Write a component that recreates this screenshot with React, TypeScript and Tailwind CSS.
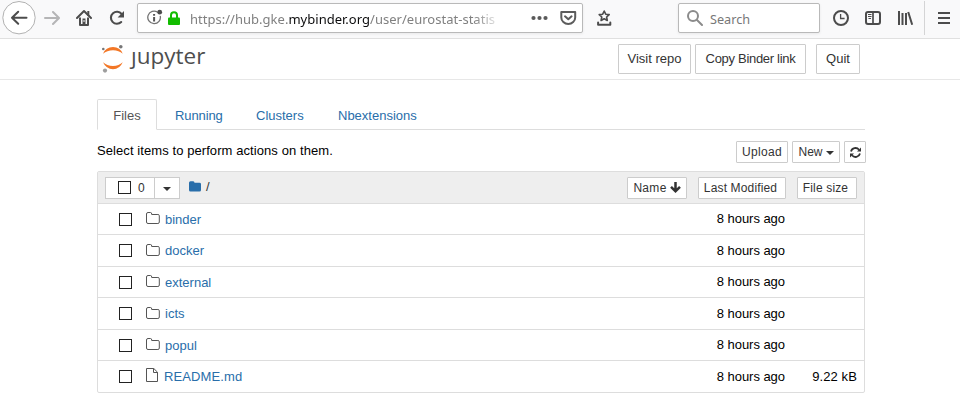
import type { ReactNode } from "react";

const SANS = "font-['Liberation_Sans',Arial,sans-serif]";
const HUMANIST = "font-['Noto_Sans','Open_Sans',sans-serif]";

function BrowserBar() {
  return (
    <div className={`flex h-[39px] items-start border-b border-[#e0e0e0] bg-[#f9f9fa] ${HUMANIST}`}>
      <svg className="mt-px ml-[2px] h-[34px] w-[34px]" viewBox="0 0 34 34" fill="none">
        <circle cx="17" cy="16.7" r="16.2" fill="#fff" stroke="#b1b1b1" />
        <path d="M24.5 16.8H10.5M16.2 10.8L10 16.8l6.2 6" stroke="#4c4c4c" strokeWidth="2" strokeLinecap="round" strokeLinejoin="round" />
      </svg>
      <svg className="mt-[9px] ml-[8px] h-[18px] w-[16px]" viewBox="0 0 16 18" fill="none">
        <path d="M1 9h13.5M9 3l6 6-6 6" stroke="#b5b5b6" strokeWidth="2" strokeLinecap="round" strokeLinejoin="round" />
      </svg>
      <svg className="mt-[9px] ml-[16px] h-[18px] w-[16px]" viewBox="0 0 16 18" fill="none">
        <path d="M1 9L8 2l7 7" stroke="#4c4c4c" strokeWidth="2" strokeLinecap="round" strokeLinejoin="round" />
        <path d="M11.3 2h2v5h-2z" fill="#4c4c4c" />
        <path d="M4 8.5V16h8V8.5" stroke="#4c4c4c" strokeWidth="2" strokeLinejoin="round" />
        <path d="M6.5 9.5h3V16h-3z" fill="#4c4c4c" />
        <path d="M7.5 11h1v2h-1z" fill="#f9f9fa" />
      </svg>
      <svg className="mt-[9px] ml-[17px] h-[18px] w-[16px]" viewBox="0 0 16 18" fill="none">
        <path d="M12.6 5A6 6 0 1 0 12.2 13" stroke="#4c4c4c" strokeWidth="2.1" strokeLinecap="round" />
        <path d="M15 2v6.4H8.6z" fill="#4c4c4c" />
      </svg>
      <div className="mt-[3px] ml-[12px] flex h-[30px] w-[446px] items-center rounded-[2px] border border-[#b9b9b9] bg-white shadow-[0_1px_3px_rgba(0,0,0,0.07)]">
        <svg className="ml-[9px] h-[18px] w-[17px]" viewBox="0 0 17 18" fill="none">
          <path d="M10.7 3.2A6.3 6.3 0 1 0 13.2 6.8" stroke="#737373" strokeWidth="1.3" />
          <path d="M6.1 8h2v4.5h-2zM6.1 5h2v1.7h-2z" fill="#555" />
          <circle cx="12.7" cy="3.2" r="2.4" fill="#4c4c4c" />
        </svg>
        <svg className="ml-[4px] h-[18px] w-[12px]" viewBox="0 0 12 18" fill="none">
          <path d="M3 9V6.2a3 3 0 0 1 6 0V9" stroke="#12bc00" strokeWidth="2" />
          <rect y="8.5" width="12" height="7.6" rx="1" fill="#12bc00" />
        </svg>
        <div className="mt-[2px] ml-[10px] w-[309px] text-[13px] leading-5 tracking-[0.02px] whitespace-nowrap text-[#808080] [mask-image:linear-gradient(to_right,black_284px,transparent_312px)]">
          https://hub.gke.<span className="text-[#0c0c0d]">mybinder.org</span>/user/eurostat-statis
        </div>
        <svg className="ml-[32px] h-[6px] w-[17px]" viewBox="0 0 17 6" fill="#5a5a5a">
          <circle cx="2.5" cy="3" r="2.1" />
          <circle cx="8.5" cy="3" r="2.1" />
          <circle cx="14.5" cy="3" r="2.1" />
        </svg>
        <svg className="ml-[12px] h-[16px] w-[17px]" viewBox="0 0 17 16" fill="none" stroke="#5c5c5c" strokeWidth="2" strokeLinecap="round" strokeLinejoin="round">
          <path d="M1.3 2.1h13.9v5.3a6.95 6.6 0 0 1-13.9 0z" />
          <path d="M5 6.3l3.3 3 3.3-3" />
        </svg>
      </div>
      <svg className="mt-[9px] ml-[14px] h-[18px] w-[15px]" viewBox="0 0 15 18" fill="none" stroke="#4c4c4c">
        <path d="M7.2 2l1.5 3.2 3.5.4-2.6 2.4.7 3.5-3.1-1.8-3.1 1.8.7-3.5-2.6-2.4 3.5-.4z" strokeWidth="1.6" strokeLinejoin="round" />
        <path d="M1.1 13.6v2.2h12.2v-2.2" strokeWidth="2" strokeLinecap="round" strokeLinejoin="round" />
      </svg>
      <div className="mt-[3px] ml-[66px] flex h-[30px] w-[142px] items-center rounded-[2px] border border-[#b9b9b9] bg-white shadow-[0_1px_3px_rgba(0,0,0,0.07)]">
        <svg className="ml-[8px] h-[18px] w-[16px]" viewBox="0 0 16 18" fill="none" stroke="#8b8b8b" strokeWidth="2" strokeLinecap="round">
          <circle cx="6" cy="7" r="5" />
          <path d="M10 11l5 5" />
        </svg>
        <span className="mt-[2px] ml-[7px] text-[12.7px] leading-5 text-[#777]">Search</span>
      </div>
      <svg className="mt-[9px] ml-[13px] h-[18px] w-[17px]" viewBox="0 0 17 18" fill="none" stroke="#4c4c4c">
        <circle cx="8" cy="9" r="7" strokeWidth="2" />
        <path d="M7.6 5v4.5h4" strokeWidth="1.3" />
      </svg>
      <svg className="mt-[9px] ml-[15px] h-[18px] w-[17px]" viewBox="0 0 17 18" fill="none" stroke="#4c4c4c">
        <rect x="1" y="3" width="14" height="12" rx="2" strokeWidth="2" />
        <path d="M8 3v12" strokeWidth="1.7" />
        <path d="M3 5.5h3.5M3 7.5h3.5M3.5 9.5h2.5" strokeWidth="1" />
      </svg>
      <svg className="mt-[9px] ml-[16px] h-[18px] w-[16px]" viewBox="0 0 16 18" fill="none" stroke="#4c4c4c">
        <path d="M1 2v14M4.5 4v12M8 4v12M10.2 3l4 12.7" strokeWidth="2" />
      </svg>
      <div className="mt-px ml-[10px] h-[34px] w-px bg-[#d4d4d5]" />
      <svg className="mt-[9px] ml-[13px] h-[18px] w-[12px]" viewBox="0 0 12 18" fill="#4c4c4c">
        <path d="M0 3h12v2H0zM0 8h12v2H0zM0 13h12v2H0z" />
      </svg>
    </div>
  );
}

function Button({ className, children }: { className: string; children: ReactNode }) {
  return (
    <button className={`flex shrink-0 items-center justify-center rounded-[1px] border border-[#ccc] bg-white whitespace-nowrap text-[#333] ${className}`}>
      {children}
    </button>
  );
}

function Header() {
  return (
    <header className="flex h-[41px] items-start border-b border-[#e7e7e7] pl-[101px]">
      <svg className="mt-[5px] h-[30px] w-[24px]" viewBox="0 0 24 30">
        <path d="M2 9.7Q4.8 3 12 3t9.7 6.7Q18 6.2 12 6.2T2 9.7z" fill="#f37726" />
        <path d="M2 18.3Q6 22 12 22t9.7-3.7Q18.8 25.2 12 25.2T2 18.3z" fill="#f37726" />
        <circle cx="2.3" cy="5" r="1.3" fill="#767677" />
        <circle cx="19.8" cy="2.7" r="1.8" fill="#767677" />
        <circle cx="4" cy="26.6" r="2.1" fill="#9e9e9e" />
      </svg>
      <span className="mt-[2px] ml-[6px] w-[76px] font-['Open_Sans','Noto_Sans',sans-serif] text-[22.5px] leading-[30px] text-[#4e4e4e]">ȷupyter</span>
      <div className={`mt-[5px] ml-[411px] flex text-[13px] ${SANS}`}>
        <Button className="h-[30px] w-[73px]">Visit repo</Button>
        <Button className="ml-[4px] h-[30px] w-[111px] tracking-[-0.3px]">Copy Binder link</Button>
        <Button className="ml-[10px] h-[30px] w-[44px]">Quit</Button>
      </div>
    </header>
  );
}

function Caret() {
  return (
    <svg className="h-[4px] w-[8px]" viewBox="0 0 8 4" fill="#333">
      <path d="M0 0h8L4 4z" />
    </svg>
  );
}

function Checkbox() {
  return <span className="block h-[13px] w-[13px] shrink-0 border border-[#222] bg-white" />;
}

function FolderOutline() {
  return (
    <svg className="h-[12px] w-[14px]" viewBox="0 0 14 12" fill="none" stroke="#555">
      <path d="M.5 2Q.5.5 2 .5h2.5Q5.7.5 5.7 2v.5h6.2q1.4 0 1.4 1.2v6.3q0 1.5-1.4 1.5H2Q.5 11.5.5 10z" />
    </svg>
  );
}

function FileOutline() {
  return (
    <svg className="h-[14px] w-[12px]" viewBox="0 0 12 14" fill="none" stroke="#555">
      <path d="M.5.5h7.3l3.7 3.7v9.3H.5zM7.5.5v4h4" />
    </svg>
  );
}

const rows = [
  { name: "binder", height: "h-[31px]", nudge: "pt-[2px]" },
  { name: "docker", height: "h-[32px]", nudge: "" },
  { name: "external", height: "h-[31px]", nudge: "pt-[2px]" },
  { name: "icts", height: "h-[32px]", nudge: "" },
  { name: "popul", height: "h-[31px]", nudge: "pt-[2px]" },
  { name: "README.md", height: "h-[31px]", nudge: "", size: "9.22 kB" },
];

function FileTable() {
  return (
    <section className="mt-[8px] ml-[97px] w-[768px] rounded-[2px] border border-[#ddd]">
      <div className="flex h-[32px] items-center border-b border-[#ddd] bg-[#eee] text-[12px]">
        <div className="ml-[7px] flex h-[22px] w-[75px] border border-[#ccc] bg-white text-[#333]">
          <div className="flex w-[49px] items-center border-r border-[#ccc] pl-[12px]">
            <Checkbox />
            <span className="ml-[7px]">0</span>
          </div>
          <div className="flex flex-1 items-center justify-center pt-[2px]">
            <Caret />
          </div>
        </div>
        <svg className="mb-[3px] ml-[9px] h-[11px] w-[12px]" viewBox="0 0 12 11" fill="#296eaa">
          <path d="M0 1.8Q0 .3 1.5.3h2.7q1.3 0 1.3 1.5h5Q12 1.8 12 3.2v5.7q0 1.5-1.5 1.5h-9Q0 10.4 0 8.9z" />
        </svg>
        <span className="mb-[2px] ml-[5px] text-[13px] text-[#333]">/</span>
        <Button className="ml-auto h-[22px] w-[60px] tracking-[0.3px]">
          Name
          <svg className="ml-[3px] h-[11px] w-[11px]" viewBox="0 0 11 11" fill="none" stroke="#333" strokeWidth="2.5">
            <path d="M5.5 0v9M1 4.8l4.5 4.4L10 4.8" />
          </svg>
        </Button>
        <Button className="ml-[11px] h-[22px] w-[88px] pr-[3px] tracking-[0.15px]">Last Modified</Button>
        <Button className="mr-[7px] ml-[11px] h-[22px] w-[60px] pr-[3px] tracking-[0.15px]">File size</Button>
      </div>
      {rows.map((row, i) => (
        <div key={row.name} className={`flex items-center text-[13px] leading-[18px] ${row.height} ${i < rows.length - 1 ? "border-b border-[#ddd]" : ""}`}>
          <span className="ml-[21px]">
            <Checkbox />
          </span>
          <span className={row.size ? "mb-[4px] ml-[14px]" : "mb-[2px] ml-[14px]"}>{row.size ? <FileOutline /> : <FolderOutline />}</span>
          <a className={`text-[#296eaa] ${row.nudge} ${row.size ? "ml-[6px] tracking-[0.12px]" : "ml-[5px]"}`}>{row.name}</a>
          <span className="ml-auto tracking-[-0.04px] text-black">8 hours ago</span>
          <span className="mr-[7px] w-[72px] text-right tracking-[0.1px] text-black">{row.size}</span>
        </div>
      ))}
    </section>
  );
}

export default function App() {
  return (
    <div className={`h-[404px] w-[960px] overflow-hidden bg-white ${SANS}`}>
      <BrowserBar />
      <Header />
      <nav className="mt-[19px] ml-[97px] flex h-[31px] w-[768px] border-b border-[#ddd] text-[13px] leading-[18px] text-[#296eaa]">
        <a className="flex h-[31px] w-[60px] items-center justify-center rounded-t-[2px] border border-[#ddd] border-b-white bg-white pt-[2px] text-[#555]">Files</a>
        <a className="ml-[18px] w-[47px] pt-[8px] tracking-[-0.1px] whitespace-nowrap">Running</a>
        <a className="ml-[34px] w-[48px] pt-[8px] whitespace-nowrap">Clusters</a>
        <a className="ml-[34px] pt-[8px] whitespace-nowrap">Nbextensions</a>
      </nav>
      <div className="mt-[11px] ml-[97px] flex h-[22px] w-[769px] items-start text-[12px]">
        <span className="text-[13px] leading-[19px] tracking-[0.08px] text-black">Select items to perform actions on them.</span>
        <Button className="ml-auto h-[22px] w-[52px] tracking-[0.3px]">Upload</Button>
        <Button className="ml-[4px] h-[22px] w-[48px]">
          New
          <span className="mt-[2px] ml-[3px]">
            <Caret />
          </span>
        </Button>
        <Button className="ml-[4px] h-[22px] w-[22px]">
          <svg className="h-[11px] w-[11px]" viewBox="0 0 11 11" fill="none" stroke="#333" strokeWidth="1.8">
            <path d="M1 4.5a4.6 4.6 0 0 1 8-1.8M10 6.5a4.6 4.6 0 0 1-8 1.8" />
            <path d="M11 .5v4H7zM0 10.5v-4h4z" fill="#333" stroke="none" />
          </svg>
        </Button>
      </div>
      <FileTable />
    </div>
  );
}
